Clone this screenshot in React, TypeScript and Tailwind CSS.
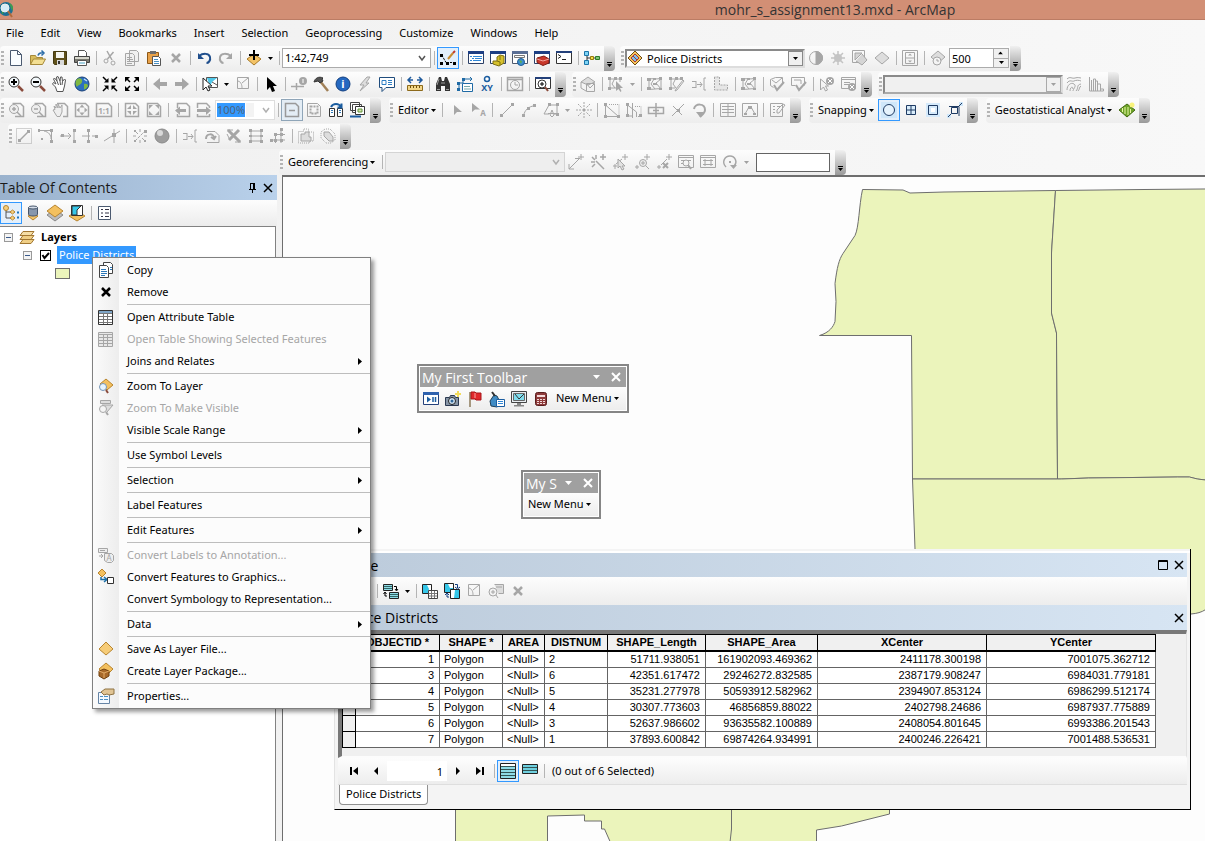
import React from 'react';
import clsx from 'clsx';

/* 16x16 drawings. Shapes without their own colour take the button's text colour. */
const icons: Record<string, React.ReactNode> = {
  arcmap: (
    <>
      <circle cx="6" cy="7" r="7" fill="#1c6f95" stroke="none" />
      <path d="M1 4c3-4 6 0 4 3s-1 5-3 5M9 1c4 1 5 5 3 8" fill="#3f9a52" stroke="none" />
      <circle cx="5" cy="6" r="4" fill="#d5ecf8" stroke="#eee" />
      <path d="M8 9l4 6" stroke="#b06a3a" strokeWidth="2" />
    </>
  ),
  newDoc: (
    <>
      <path d="M2.5.5h7l4 4v11h-11z" fill="#fafdff" stroke="#4b5a70" />
      <path d="M9.5.5v4h4" stroke="#4b5a70" />
    </>
  ),
  open: (
    <>
      <path d="M.5 14.5v-9h5l1 2h6v2" fill="#d9bd5c" stroke="#a5893a" />
      <path d="M.5 14.5l3-5.5h12l-3 5.5z" fill="#f3df93" stroke="#a5893a" />
      <path d="M8 5.5c1-3 3-3 6-2.5M11.5.5L14 3l-2.5 2.5" stroke="#2c6da8" strokeWidth="1.5" />
    </>
  ),
  save: (
    <>
      <path d="M1.5 1.5h13v13h-12l-1-1z" fill="#5f511b" stroke="#463b12" />
      <path d="M4 2h8v6H4z" fill="#f7f7f2" stroke="none" />
      <path d="M5 10h7v5H5z" fill="#d9d9d9" stroke="none" />
      <path d="M6 11h2v3H6z" fill="#333" stroke="none" />
    </>
  ),
  print: (
    <>
      <path d="M4.5 6V.5h6l2 2V6" fill="#fff" stroke="#555" />
      <path d="M.5 6.5h15v6H.5z" fill="#7a7a70" stroke="#444" />
      <path d="M1 7h14v2H1z" fill="#d6d6cc" stroke="none" />
      <path d="M3.5 10.5h9v5h-9z" fill="#fff" stroke="#555" />
      <path d="M5 13h6" stroke="#4aa3c4" />
    </>
  ),
  cut: (
    <>
      <path d="M5 1l5 9M11.5 2l-6 7" strokeWidth="1.5" />
      <circle cx="4" cy="11" r="2" />
      <circle cx="11" cy="13" r="2" />
    </>
  ),
  copy: (
    <>
      <path d="M5.5.5h7l2 2v9h-9zM1.5 3.5h7l2 2v10h-9z" fill="#f1f1f1" />
      <path d="M3 7.5h5M3 9.5h6M3 11.5h6M3 13.5h5" />
    </>
  ),
  copyColor: (
    <>
      <path d="M5.5.5h7l2 2v9h-9z" fill="#fff" stroke="#444" />
      <path d="M1.5 3.5h7l2 2v10h-9z" fill="#fff" stroke="#444" />
      <path d="M3 7.5h5M3 9.5h6M3 11.5h6M3 13.5h4M12 5.5h2M12 7.5h2" stroke="#2d78b8" />
    </>
  ),
  paste: (
    <>
      <path d="M1.5 2.5h11v11h-11z" fill="#e8a24a" stroke="#8c5717" />
      <path d="M4 1h6v3H4z" fill="#6d6d6d" stroke="none" />
      <path d="M6.5 6.5h6l2 2v7h-8z" fill="#fff" stroke="#555" />
      <path d="M8 9.5h4M8 11.5h5M8 13.5h5" stroke="#4a90c4" />
    </>
  ),
  x: <path d="M4 4l8 8M12 4l-8 8" strokeWidth="2.5" />,
  undo: (
    <>
      <path d="M3 6c4-3 10-3 11 1s-2 6-3.5 6" stroke="#1f4e8c" strokeWidth="2" />
      <path d="M2 3v6h6z" fill="#1f4e8c" stroke="none" />
    </>
  ),
  redo: (
    <>
      <path d="M13 6C9 3 3 3 2 7s2 6 3.5 6" strokeWidth="2" />
      <path d="M14 3v6H8z" fill="currentColor" stroke="none" />
    </>
  ),
  addData: (
    <>
      <path d="M1 9l7-5 7 5-7 6z" fill="#f3c367" stroke="#a87a28" />
      <path d="M8 0v10M3 5h10" stroke="#000" strokeWidth="2" />
    </>
  ),
  editSketch: (
    <>
      <path d="M2 5.5l4 7h8" stroke="#000" strokeDasharray="2 1" />
      <path d="M0 4h3v3H0zM0 12h3v3H0zM6 12h3v3H6zM13 12h3v3h-3z" fill="#000" stroke="none" />
      <path d="M8 9l5-6" stroke="#c98d32" strokeWidth="2" />
      <path d="M13 3l2-2" stroke="#c0392b" strokeWidth="2" />
    </>
  ),
  winToc: (
    <>
      <path d="M.5 1.5h15v12H.5z" fill="#fff" stroke="#2b3f66" />
      <path d="M0 1h16v3H0z" fill="#1d3f84" stroke="none" />
      <path d="M2 6.5h2M5 6.5h9M4 8.5h2M7 8.5h7M2 10.5h2M5 10.5h8" stroke="#2f86d6" />
    </>
  ),
  winCatalog: (
    <>
      <path d="M.5 1.5h15v12H.5z" fill="#fff" stroke="#2b3f66" />
      <path d="M0 1h16v3H0z" fill="#1d3f84" stroke="none" />
      <path d="M3 11h4V7l3-2 4 1v7l-5 3-6-2z" fill="#d6c12c" stroke="#7c6e10" />
      <path d="M7 11l3 1v3M10 6v4" stroke="#7c6e10" />
    </>
  ),
  winSearch: (
    <>
      <path d="M.5 1.5h15v12H.5z" fill="#fff" stroke="#4d586c" />
      <path d="M0 1h16v3H0z" fill="#5b6f95" stroke="none" />
      <path d="M2.5 5.5h10v2h-10z" stroke="#777" />
      <circle cx="9" cy="12" r="3.5" fill="#3d8fd0" stroke="#1f5c94" />
      <path d="M7 10l3 1-1 3z" fill="#5fae4c" stroke="none" />
    </>
  ),
  winToolbox: (
    <>
      <path d="M.5 1.5h15v12H.5z" fill="#fff" stroke="#2b3f66" />
      <path d="M0 1h16v3H0z" fill="#1d3f84" stroke="none" />
      <path d="M3 8l7-2 5 3v4l-6 2.5-6-3z" fill="#c8372b" stroke="#7f1d15" />
      <path d="M3 9l6 2 6-2" stroke="#f2a39b" />
    </>
  ),
  winPython: (
    <>
      <path d="M.5 1.5h15v12H.5z" fill="#fff" stroke="#333" />
      <path d="M0 1h16v2H0z" fill="#23407a" stroke="none" />
      <path d="M2 4.5l3 2-3 2M6 9.5h4" stroke="#222" />
    </>
  ),
  model: (
    <>
      <path d="M3 4v8M3 8h9" stroke="#333" />
      <path d="M.5 1.5h4v4h-4zM.5 10.5h4v4h-4z" fill="#7fd4f5" stroke="#1b75a8" />
      <path d="M6.5 6.5h3v3h-3z" fill="#f7dd4c" stroke="#947a0c" />
      <path d="M11.5 6.5h4v3h-4z" fill="#7cc576" stroke="#2d7a2a" />
    </>
  ),
  layerDiamond: (
    <>
      <path d="M1 8l7-7 7 7-7 7z" fill="#f6c65c" stroke="#6d4a13" />
      <path d="M4 8l4-4 4 4-4 4z" fill="#7fc2ea" stroke="#a33" />
      <path d="M6 6l4 4" stroke="#a33" />
    </>
  ),
  contrast: (
    <>
      <circle cx="8" cy="8" r="6.5" />
      <path d="M8 1.5a6.5 6.5 0 0 1 0 13z" fill="currentColor" />
    </>
  ),
  sun: (
    <>
      <path d="M8 1v14M1 8h14M3 3l10 10M13 3L3 13" stroke="#c4c4c4" strokeWidth="1.5" />
      <circle cx="8" cy="8" r="4" fill="#c4c4c4" stroke="none" />
    </>
  ),
  transparency: (
    <>
      <path d="M.5.5h12v12H.5z" />
      <path d="M3 10V3h7zM10 4l5 6-5 5-6-4" fill="#d5d5d5" />
    </>
  ),
  diamond: <path d="M1 8l7-6 7 6-7 6z" fill="#ddd" />,
  swipe: (
    <>
      <path d="M.5.5h15v15H.5zM3.5 2.5h9v11h-9zM3 8h10" />
      <path d="M8 3.5l2 2H6zM8 12.5l2-2H6z" fill="currentColor" stroke="none" />
    </>
  ),
  diamondClock: (
    <>
      <path d="M1 7l7-6 7 6-7 6z" fill="#ddd" />
      <circle cx="7" cy="11" r="4" fill="#f4f4f4" />
      <path d="M7 9v2h2" />
    </>
  ),
  zoomIn: (
    <>
      <path d="M10 10l5 5" stroke="#8a4b3c" strokeWidth="2.5" />
      <circle cx="6" cy="6" r="5" fill="#f4fafd" stroke="#333" />
      <path d="M6 3v6M3 6h6" stroke="#000" strokeWidth="2" />
    </>
  ),
  zoomOut: (
    <>
      <path d="M10 10l5 5" stroke="#8a4b3c" strokeWidth="2.5" />
      <circle cx="6" cy="6" r="5" fill="#f4fafd" stroke="#333" />
      <path d="M3 6h6" stroke="#000" strokeWidth="2" />
    </>
  ),
  hand: (
    <>
      <path
        d="M5 15.5L3.5 11 .5 8l1-1.5L4 8 1.5 3l1-1L5 5 4.5 1 6 .5 8 5l.5-4L10 1l.5 4.5L12.5 3l1 1-1 6-1.5 5.5z"
        fill="#fff"
        stroke="#555"
      />
      <path d="M5 5l1.5 4M8 5l.5 4M10.5 5.5L10 9" stroke="#555" />
    </>
  ),
  globe: (
    <>
      <circle cx="8" cy="8" r="7" fill="#2c6fc0" stroke="#1a3f75" />
      <path d="M3 3c3-2 6 0 5 3s-4 3-5 5C1 9 1 5 3 3zM10 8c3-1 4 1 4 2-1 2-3 4-4 3z" fill="#7fb842" stroke="none" />
      <path d="M10 3l3 2" stroke="#bfe0ff" strokeWidth="1.5" />
    </>
  ),
  fixedIn: (
    <>
      <path d="M1 1l4 4M15 1l-4 4M1 15l4-4M15 15l-4-4" strokeWidth="1.5" />
      <path d="M6.5 2v4.5H2zM9.5 2v4.5H14zM6.5 14V9.5H2zM9.5 14V9.5H14z" fill="currentColor" stroke="none" />
    </>
  ),
  fixedOut: (
    <>
      <path d="M2 2l4 4M14 2l-4 4M2 14l4-4M14 14l-4-4" strokeWidth="1.5" />
      <path d="M1 1h5L1 6zM15 1h-5l5 5zM1 15h5l-5-5zM15 15h-5l5-5z" fill="currentColor" stroke="none" />
    </>
  ),
  left: <path d="M1 8l7-6v4h7v4H8v4z" fill="currentColor" stroke="none" />,
  right: <path d="M15 8L8 2v4H1v4h7v4z" fill="currentColor" stroke="none" />,
  selectFeat: (
    <>
      <path d="M4.5 1.5h11v10h-11z" fill="#fff" stroke="#555" />
      <path d="M5 2h10l-5 4-2 5z" fill="#4fc8ea" stroke="none" />
      <path d="M10 6l5 3" stroke="#555" />
      <path d="M1 2v12l3-3 2 4 2-1-2-4h4z" fill="#fff" stroke="#222" />
    </>
  ),
  clearSel: <path d="M2.5 1.5h11v11h-11zM3 5c4 1 4 6 4 7M7 7l6-5" />,
  pointer: <path d="M4 1v13l3-3 2 5 3-1-2-5h4z" fill="#000" stroke="none" />,
  identifyOff: (
    <>
      <circle cx="12" cy="5" r="4" fill="currentColor" stroke="none" />
      <path d="M12 3v4" stroke="#fff" />
      <path d="M0 10.5h13M5.5 7v7" strokeWidth="1.5" />
    </>
  ),
  hammer: (
    <>
      <path d="M7 5l8 10" stroke="#a08058" strokeWidth="2.5" />
      <path d="M1 6c1-4 5-6 9-4l-1 1 1 2-3 2-2-2z" fill="#555" stroke="#333" />
    </>
  ),
  info: (
    <>
      <circle cx="8" cy="8" r="7" fill="#2468c0" stroke="#123f80" />
      <text x="8" y="12" textAnchor="middle" fontSize="11" fontWeight="bold" fill="#fff" stroke="none">
        i
      </text>
    </>
  ),
  bolt: <path d="M10 1L3 9h4l-4 6 9-8H9l4-6z" fill="#ddd" />,
  popup: (
    <>
      <path d="M.5 1.5h15v10H7l-4 4v-4H.5z" fill="#fff" stroke="#1f4c7d" />
      <path d="M3 4.5h4v4H3zM9 4.5h4M9 6.5h4M9 8.5h4" stroke="#2d7ec4" />
    </>
  ),
  measure: (
    <>
      <path d="M1 4h5M10 4h5M4 1L1 4l3 3M12 1l3 3-3 3" stroke="#1f5a9c" strokeWidth="1.5" />
      <path d="M.5 9.5h15v5H.5z" fill="#f3d789" stroke="#8d6a1c" />
      <path d="M3.5 10v2M6.5 10v2M9.5 10v2M12.5 10v2" stroke="#6b4d0d" />
    </>
  ),
  binoculars: (
    <>
      <path d="M1 15V8l3-7h2l1 4h2l1-4h2l3 7v7h-5v-5H6v5z" fill="#333" stroke="none" />
      <path d="M6 7h4M2 13.5h3M11 13.5h3M4 3l-2 6" stroke="#9a9a9a" />
    </>
  ),
  route: (
    <>
      <path d="M2 13V7h4V3h9M13 1l2 2-2 2" stroke="#1f6aa5" />
      <path d="M0 12h3v3H0zM0 6h3v3H0zM5 2h3v3H5z" fill="#1f6aa5" stroke="none" />
      <path d="M5.5 7.5h10v8h-10z" fill="#fff" stroke="#1f6aa5" />
      <path d="M7 10.5h6M7 13h7" stroke="#7aa" />
    </>
  ),
  xy: (
    <>
      <circle cx="8" cy="3" r="2.5" fill="#fff" stroke="#1b5da0" strokeWidth="1.5" />
      <text x="8" y="15" textAnchor="middle" fontSize="9" fontWeight="bold" fill="#1b5da0" stroke="none">
        XY
      </text>
    </>
  ),
  timeWin: (
    <>
      <path d="M.5 1.5h15v13H.5zM1 3.5h14" strokeWidth="1.5" />
      <circle cx="8" cy="9" r="4.5" />
      <path d="M8 6v3h3" />
    </>
  ),
  viewer: (
    <>
      <path d="M.5 1.5h15v11H.5z" fill="#fff" stroke="#333" />
      <path d="M0 1h16v2H0z" fill="#23407a" stroke="none" />
      <circle cx="7" cy="8" r="4" fill="#fff" stroke="#333" />
      <path d="M7 6v4M5 8h4" stroke="#000" />
      <path d="M10 11l3 4" stroke="#8a4b3c" strokeWidth="2" />
    </>
  ),
  boxes: (
    <>
      <path d="M1 6l7-5 7 5-7 3z" fill="#ddd" />
      <path d="M1 6v6l5 3M6.5 7.5h8v8h-8zM7 8l3 4 4-4" />
    </>
  ),
  mesh: (
    <>
      <path d="M2 3c4-1 8 1 12-1M2 13c4 1 8-1 12 0M2 3v10M14 2v11M7 3L4 8l4 5M14 3l-5 4 5 6" />
      <path d="M0 2h4v3H0zM6 2h3v2H6zM12 1h3v3h-3zM0 11h4v3H0zM12 12h3v2h-3zM6 7h4v2H6z" fill="currentColor" stroke="none" />
    </>
  ),
  meshArrow: (
    <>
      <path d="M1 3h12M1 12h7M2 2v11M12 2v4M7 2L4 8l3 4" />
      <path d="M8 5v10l2.5-2 2 3 1-1-1.5-3h3z" fill="currentColor" stroke="none" />
      <path d="M0 1h3v3H0zM6 1h3v3H6zM11 1h3v3h-3zM0 11h3v3H0z" fill="currentColor" stroke="none" />
    </>
  ),
  meshPencil: (
    <>
      <path d="M1 3h12M2 2v11M2 12h4M7 2L4 8l3 4M15 5l-7 9-2 1 1-2 7-9z" />
      <path d="M0 1h3v3H0zM6 1h3v3H6zM11 1h3v3h-3zM0 11h3v3H0z" fill="currentColor" stroke="none" />
    </>
  ),
  extend: <path d="M1 5.5h4M1 11.5h4M5 5v7M6 8.5h5M9 6l2 2.5L9 11M15 2h-2v12h2" />,
  corner: <path d="M1.5 1v13h13v-5H6.5V1z" strokeDasharray="2 1" fill="#e6e6e6" />,
  validate: (
    <>
      <path d="M1.5 3.5l5-2h7v7M1.5 3.5v6l3 2M3 4l4 3 6-5" />
      <path d="M5 9l3 5 7-8" strokeWidth="2" />
    </>
  ),
  validateExtent: (
    <>
      <path d="M.5 1.5h13v8M.5 1.5v8h4M3 4h7v4" />
      <path d="M5 9l3 5 7-8" strokeWidth="2" />
    </>
  ),
  fixErr: (
    <>
      <path d="M1.5 3v11l3-3 2 4 2-1-2-4h3z" />
      <circle cx="11" cy="5" r="4" fill="currentColor" stroke="none" />
      <path d="M9 3l4 4M13 3L9 7" stroke="#fff" />
    </>
  ),
  errWin: (
    <>
      <path d="M.5 1.5h14v11H.5zM1 3.5h13M3 6.5h6M3 8.5h5" />
      <circle cx="11" cy="11" r="4" fill="currentColor" stroke="none" />
      <path d="M9 9l4 4M13 9l-4 4" stroke="#fff" />
    </>
  ),
  contours: (
    <path d="M1 3c3-3 5 0 8-1s5 0 6 0M1 7c3-4 5-1 7-2s5-1 7 0M1 14c0-5 4-8 7-6s-1 5-1 7M4 15c0-4 3-5 3-2M10 15c3-3 0-6 5-7M12 15c2-2 1-4 3-5" />
  ),
  histogram: <path d="M1.5 1v14h14v-2h-3V8h-3V5h-2V3h-2v12M7.5 5v10M9.5 8v7M12.5 12v3M3.5 4v11" />,
  pageZoomIn: (
    <>
      <path d="M4.5 1.5h8l3 3v10H7" strokeWidth="1.5" />
      <circle cx="6" cy="7" r="4.5" fill="#eee" />
      <path d="M6 5v4M4 7h4M9 10l4 4" strokeWidth="1.5" />
    </>
  ),
  pageZoomOut: (
    <>
      <path d="M4.5 1.5h8l3 3v10H7" strokeWidth="1.5" />
      <circle cx="6" cy="7" r="4.5" fill="#eee" />
      <path d="M4 7h4M9 10l4 4" strokeWidth="1.5" />
    </>
  ),
  pageHand: (
    <>
      <path d="M5 1.5h7.5l3 3v10H11" strokeWidth="1.5" />
      <path d="M5 14.5L1 8l2-.5L2 4l2 2V2l2 4V2l2 4 2-3v7l-2 4.5z" fill="#eee" />
    </>
  ),
  pageFull: (
    <>
      <path d="M1.5 1.5h10l3 3v10h-13z" strokeWidth="1.5" />
      <path d="M8 2.5l2.5 3h-5zM8 13.5l2.5-3h-5zM2.5 8l3-2.5v5zM13.5 8l-3-2.5v5z" fill="currentColor" stroke="none" />
    </>
  ),
  page11: (
    <>
      <path d="M.5 1.5h12l3 3v10H.5z" strokeWidth="1.5" />
      <text x="8" y="12" textAnchor="middle" fontSize="8" fontWeight="bold" fill="currentColor" stroke="none">
        1:1
      </text>
    </>
  ),
  pageIn: (
    <>
      <path d="M1.5 1.5h10l3 3v10h-13z" strokeWidth="1.5" />
      <path d="M7 3v4H3zM9 3v4h4zM7 13V9H3zM9 13V9h4z" fill="currentColor" stroke="none" />
    </>
  ),
  pageOut: (
    <>
      <path d="M1.5 1.5h10l3 3v10h-13z" strokeWidth="1.5" />
      <path d="M3 3h4L3 7zM13 3H9l4 4zM3 13h4L3 9zM13 13H9l4-4z" fill="currentColor" stroke="none" />
    </>
  ),
  pageLeft: (
    <>
      <path d="M3.5 6V1.5h9l3 3v10h-12V12" strokeWidth="1.5" />
      <path d="M1 8.5l5-4V7h6v3H6v3z" fill="currentColor" stroke="none" />
    </>
  ),
  pageRight: (
    <>
      <path d="M1.5 6V1.5h9l3 3V6M1.5 12v2.5h12V12" strokeWidth="1.5" />
      <path d="M15 8.5l-5-4V7H1v3h9v3z" fill="currentColor" stroke="none" />
    </>
  ),
  layoutPage: <path d="M1.5 1.5h10l3 3v10h-13zM5 8.5h6" strokeWidth="1.5" />,
  focusFrame: (
    <>
      <path d="M1.5 1.5h10l3 3v10h-13z" />
      <path d="M4.5 4.5h7v7h-7z" strokeDasharray="2 1" strokeWidth="2" />
    </>
  ),
  changeLayout: (
    <>
      <path d="M1.5 6.5h5v8h-5zM9.5 6.5h5v8h-5z" fill="#fff" stroke="#333" />
      <path d="M3 8.5h2M3 10.5h2M11 8.5h2M11 10.5h2" stroke="#2d78b8" />
      <path d="M3 5c2-4 8-4 10 0M13.5 1.5v4h-4" stroke="#1b5da0" strokeWidth="2" />
    </>
  ),
  dataPages: (
    <>
      <path d="M.5.5h9v8H.5zM2.5 2.5h9v8h-9z" fill="#fff" stroke="#444" />
      <path d="M5.5 4.5h9v8h-9z" fill="#fff" stroke="#333" />
      <path d="M8 7h4v3H8z" fill="#d5e8a8" stroke="#5f8f3f" />
      <path d="M0 14.5h11" stroke="#1b5da0" strokeWidth="2" />
    </>
  ),
  arrowGray: <path d="M5 3v10l3-3h5z" fill="currentColor" stroke="none" />,
  arrowA: (
    <>
      <path d="M1 1v9l3-2.5h5z" fill="currentColor" stroke="none" />
      <text x="12" y="14" textAnchor="middle" fontSize="8" fontWeight="bold" fill="currentColor" stroke="none">
        A
      </text>
    </>
  ),
  line: (
    <>
      <path d="M3 13L13 3" />
      <path d="M1 12h3v3H1zM12 1h3v3h-3z" fill="currentColor" stroke="none" />
    </>
  ),
  arc: (
    <>
      <path d="M3 13c0-4 5-9 10-9" />
      <path d="M1 12h3v3H1zM6 5h3v3H6zM12 2h3v3h-3z" fill="currentColor" stroke="none" />
    </>
  ),
  trace: (
    <>
      <path d="M6 3h8v9h-3M1 12l5-9M1 12h5" />
      <path d="M5 1h3v3H5zM13 1h3v3h-3zM13 11h3v3h-3z" fill="currentColor" stroke="none" />
      <path d="M7 13l2-5 2 5-2 2zM5 11.5h8" />
    </>
  ),
  burst: (
    <>
      <path d="M8 0v5M8 11v5M0 8h5M11 8h5M2 2l4 4M14 2l-4 4M2 14l4-4M14 14l-4-4" strokeDasharray="2 1" />
      <path d="M7 7h2v2H7z" fill="currentColor" />
    </>
  ),
  reshape: (
    <>
      <path d="M1.5 2v12.5h13L1.5 3" />
      <path d="M5 2.5h10V13" strokeDasharray="1 1" />
      <path d="M0 1h3v3H0zM0 13h3v3H0zM13 13h3v3h-3z" fill="currentColor" stroke="none" />
    </>
  ),
  cutPoly: (
    <>
      <path d="M1.5 2v12h5M6.5 1v15M1.5 3l9 7v4" />
      <path d="M9 4.5h6v10H9" strokeDasharray="1 1" />
      <path d="M0 1h3v3H0zM0 12h3v3H0zM13 12h3v3h-3z" fill="currentColor" stroke="none" />
    </>
  ),
  split: <path d="M.5 5.5h15v6H.5zM8 1v14M5 8.5h6" strokeWidth="1.5" />,
  cross: (
    <>
      <path d="M2 14L14 2M3 4l9 9" />
      <path d="M7 7h3v3H7z" fill="currentColor" stroke="none" />
    </>
  ),
  rotate: (
    <>
      <path d="M2 7c1-6 11-6 11 1 0 3-3 5-5 7" strokeWidth="2" />
      <path d="M4 10h8l-4 5z" fill="currentColor" stroke="none" />
    </>
  ),
  tableGray: <path d="M.5 1.5h15v13H.5zM2 4.5h12M2 7.5h12M2 10.5h12M8 2v12" />,
  sketchProps: (
    <>
      <path d="M.5 1.5h15v13H.5zM3 12l4-7h2l4 7" />
      <path d="M6 4h4v3H6zM2 11h3v2H2zM11 11h3v2h-3z" fill="currentColor" stroke="none" />
    </>
  ),
  formPencil: <path d="M.5 1.5h12v13H.5zM3 4.5h2M3 7.5h2M3 10.5h2M7 4.5h4M7 8v3h2l6-8-2-1z" />,
  snapPoint: (
    <>
      <path d="M0 0h16v16H0z" fill="#cfe7fa" stroke="none" />
      <circle cx="8" cy="8" r="5.5" stroke="#1f3b63" fill="#e6f3fd" />
    </>
  ),
  snapGrid: <path d="M3.5 3.5h9v9h-9zM8 3.5v9M3.5 8h9" stroke="#1f3b63" fill="#d9edfb" />,
  snapSquare: (
    <>
      <path d="M1 1h14v14H1z" fill="#d5eafb" stroke="none" />
      <path d="M3.5 3.5h9v9h-9z" stroke="#1f3b63" />
      <path d="M6 6h4v4H6z" fill="#fff" stroke="none" />
    </>
  ),
  snapEdge: (
    <>
      <path d="M0 12h4v4H0zM12 0h4v4h-4z" fill="#cfe7fa" stroke="none" />
      <path d="M4.5 5.5h6v6h-6zM1 15l3.5-3.5M10.5 5.5L15 1M2 4.5h10V14" stroke="#1f3b63" />
    </>
  ),
  geostat: (
    <>
      <path d="M0 8l8-6 8 6-8 7z" fill="#6ea428" stroke="#41690f" />
      <path d="M3.5 6v4M6 5v7M9 5v8M11.5 7v4" stroke="#e9f7a8" />
      <circle cx="13" cy="3" r="2.5" fill="#f9f37c" stroke="none" />
    </>
  ),
  boxLine: (
    <>
      <path d="M.5.5h15v15H.5z" strokeDasharray="1 1" />
      <path d="M4 12l8-8" strokeWidth="1.5" />
      <path d="M2 11h3v3H2zM11 2h3v3h-3z" fill="currentColor" stroke="none" />
    </>
  ),
  fillet: (
    <>
      <path d="M1 2.5h12.5V15M6 3c5 1 7 4 7 8" />
      <path d="M12 1h3v3h-3zM12 12h3v3h-3zM3 10h2v2H3zM0 1h2v3H0z" fill="currentColor" stroke="none" />
    </>
  ),
  extendLine: (
    <>
      <path d="M0 8h10M8 5l3 3-3 3M14 2v12" />
      <path d="M1 6h3v3H1zM13 1h3v3h-3zM13 12h3v3h-3z" fill="currentColor" stroke="none" />
    </>
  ),
  trim: (
    <>
      <path d="M0 8h8M6.5 2v12M10 8h6" />
      <path d="M5 1h3v3H5zM5 12h3v3H5zM13 7h3v3h-3z" fill="currentColor" stroke="none" />
    </>
  ),
  intersect: (
    <>
      <path d="M0 13L16 3M10 1v14" />
      <path d="M8 5h4v4H8z" fill="currentColor" stroke="none" />
    </>
  ),
  explode: (
    <>
      <path d="M3 13l10-10M4 4l2 2M10 10l3 3M8 1v3M8 12v3M1 8h3M12 8h3" strokeDasharray="3 1" />
      <path d="M2 2h2v2H2zM12 2h3v3h-3zM2 12h2v2H2zM12 12h2v2h-2z" fill="currentColor" stroke="none" />
    </>
  ),
  sphere: (
    <>
      <circle cx="8" cy="8" r="7" fill="#9d9d9d" stroke="#8a8a8a" />
      <circle cx="6" cy="5" r="3" fill="#d9d9d9" stroke="none" />
    </>
  ),
  pageRotate: (
    <>
      <path d="M3 3.5h8l4 4v7H3" />
      <path d="M2 11c0-6 8-6 8-1M12 8l-2 3-3-2" strokeWidth="2" />
    </>
  ),
  wand: (
    <>
      <path d="M2 2l12 12M13 2L3 12" strokeWidth="3" />
      <path d="M1 2h6M9 14h6M1 6l3 6" />
    </>
  ),
  rubber: (
    <>
      <path d="M3 2v12M13 2v12M2 3h12M2 8h12M2 13h12" />
      <path d="M1 1h3v3H1zM12 1h3v3h-3zM1 12h3v3H1zM12 12h3v3h-3zM1 7h3v2H1zM12 7h3v2h-3z" fill="currentColor" stroke="none" />
    </>
  ),
  grid: (
    <>
      <path d="M5.5 6v9M11 1v14M5 6.5h10M1 12h14" />
      <path d="M10 0h3v3h-3zM4 5h3v3H4zM10 5h3v3h-3zM10 11h3v3h-3zM0 11h3v3H0zM4 11h3v3H4z" fill="currentColor" stroke="none" />
    </>
  ),
  union: (
    <>
      <path d="M.5 3.5h5V1h5v3h5v9h-4v2h-11z" strokeDasharray="1 1" />
      <path d="M3 6h4V4h4v5h2v4H3z" fill="#ddd" />
    </>
  ),
  buffer: (
    <>
      <path d="M1 4l4-3h5l5 5v6l-4 3H6L1 10z" strokeDasharray="1 1" />
      <path d="M4 4h5l4 5v4H9L4 8z" fill="#ddd" />
    </>
  ),
  linkAdd: <path d="M1 15L11 5M13 0v6M10 3h6M7 4.5h5M1 10v5h5" />,
  linkAuto: <path d="M6 7l8 8M13 0v6M10 3h6M1 8h4M6 1v4M2 3l3 3M2 13l3-3" strokeWidth="1.5" />,
  linkSelect: (
    <>
      <path d="M13 0v6M10 3h6M1 12h4M3 10v5M10 5L4 10" />
      <path d="M6 5v9l2-2 2 4 2-1-2-3h3z" fill="#e2e2e2" />
    </>
  ),
  linkZoom: (
    <>
      <path d="M13 0v6M10 3h6M1 13h4M3 11v4M11 11l4 4" />
      <circle cx="9" cy="9" r="3.5" fill="#eee" />
      <path d="M9 7v4M7 9h4" />
    </>
  ),
  linkDelete: (
    <>
      <path d="M13 0v6M10 3h6M1 13h4M3 11v4M11 5L5 11" />
      <path d="M7 9l5 5M12 9l-5 5" strokeWidth="2" />
    </>
  ),
  viewLink: (
    <>
      <path d="M.5 1.5h15v12H.5zM1 3.5h14M3 6.5h3M10 6.5h3M3 9.5h2" />
      <circle cx="8" cy="9" r="3" />
      <path d="M10 11l3 4" strokeWidth="2" />
    </>
  ),
  linkTable: <path d="M.5 1.5h15v12H.5zM1 3.5h14M3 6.5h10M3 10.5h10M5 5v7M11 5v7" />,
  rotateCw: (
    <>
      <path d="M4 13C-1 8 3 2 8 2s8 6 4 10" strokeWidth="1.5" />
      <path d="M8 11h7l-3.5 4zM7 7h2v2H7z" fill="currentColor" stroke="none" />
    </>
  ),
  tocDrawing: (
    <>
      <path d="M3 4v9h5M3 7h5" stroke="#555" />
      <circle cx="3" cy="3" r="2.5" fill="#f6cf7c" stroke="#b8852f" />
      <path d="M7 7l2.5-2L12 7 9.5 9zM7 13l2.5-2 2.5 2-2.5 2z" fill="#f6cf7c" stroke="#b8852f" />
      <path d="M14 7.5h2M14 12.5h2" stroke="#1b75c0" strokeWidth="2" />
    </>
  ),
  tocSource: (
    <>
      <path d="M3 11l5-3 5 3-5 4z" fill="#f3c367" stroke="#b8852f" />
      <path d="M3.5 2.5v7c1 2 8 2 9 0v-7" fill="#8797ad" stroke="#46556b" />
      <ellipse cx="8" cy="2.5" rx="4.5" ry="1.5" fill="#d5dde8" stroke="#46556b" />
    </>
  ),
  tocVisible: (
    <>
      <path d="M0 10l8-6 8 6-8 6z" fill="#bbb" stroke="#888" />
      <path d="M0 6l8-6 8 6-8 6z" fill="#f3c05f" stroke="#b8852f" />
    </>
  ),
  tocSelection: (
    <>
      <path d="M0 11l8-5 8 5-8 5z" fill="#f3c05f" stroke="#b8852f" />
      <path d="M2.5.5h11v10h-11z" fill="#fff" stroke="#333" />
      <path d="M3 1h9L8 5v5H3z" fill="#35c6e8" stroke="#333" />
    </>
  ),
  options: (
    <>
      <path d="M1.5 1.5h12v13h-12z" fill="#fff" stroke="#4b5a70" />
      <path d="M4 4.5h2M4 8h2M4 11.5h2M8 4.5h4M8 8h4M8 11.5h4" stroke="#334" />
    </>
  ),
  layersStack: (
    <>
      <path d="M1 14.5l3-4h11l-3 4z" fill="#f0cf86" stroke="#a27732" />
      <path d="M1 10.5l3-4h11l-3 4z" fill="#f0cf86" stroke="#a27732" />
      <path d="M1 6.5l3-4h11l-3 4z" fill="#f6dfa7" stroke="#a27732" />
    </>
  ),
  table: (
    <>
      <path d="M.5 1.5h14v14H.5z" fill="#fff" stroke="#333" />
      <path d="M1 2h13v2H1z" fill="#7fa5c6" stroke="none" />
      <path d="M1 4.5h13M1 7.5h13M1 10.5h13M1 13.5h13M5.5 4v11M9.5 4v11" stroke="#777" />
    </>
  ),
  tableOff: <path d="M.5 1.5h14v14H.5zM1 3.5h13M1 6.5h13M1 9.5h13M1 12.5h13M5.5 4v11M9.5 4v11" fill="#e8e8e8" />,
  zoomLayer: (
    <>
      <path d="M2 6l6-5 7 6-6 5z" fill="#f3c05f" stroke="#b8852f" />
      <circle cx="5" cy="9" r="3.5" fill="#e6f4ff" stroke="#7494b5" />
      <path d="M8 12l2 3" stroke="#8a4b3c" strokeWidth="2" />
    </>
  ),
  zoomVisible: (
    <>
      <path d="M2.5.5h10v3h-10zM4 5h11l-6 7" fill="#ddd" />
      <circle cx="5" cy="9" r="3.5" fill="#f4f4f4" />
      <path d="M8 12l2 3" strokeWidth="2" />
    </>
  ),
  labelAnno: (
    <>
      <path d="M.5 1.5h9v4h-9zM6.5 6.5h7l2 2v5l-2 2h-4l-3-2z" fill="#eee" />
      <path d="M2 3.5h5M1 9h4M3 7l2 2-2 2" />
      <text x="11" y="14" textAnchor="middle" fontSize="8" fill="currentColor" stroke="none">
        A
      </text>
    </>
  ),
  featGraphic: (
    <>
      <path d="M0 4l4-4 4 4-4 4z" fill="#f3c05f" stroke="#b8852f" />
      <path d="M3 8v2.5h5M6 8l3 2.5L6 13" stroke="#1b6fa8" strokeWidth="1.5" />
      <path d="M9.5 8.5h6v6h-6z" fill="#fff" stroke="#333" />
    </>
  ),
  layerFile: <path d="M1 8l7-7 7 7-7 6z" fill="#f6cc78" stroke="#b8852f" />,
  layerPkg: (
    <>
      <path d="M1 6l7-6 7 6-7 7z" fill="#f3c05f" stroke="#b8852f" />
      <path d="M1 8l5-2 5 2v5l-5 3-5-3z" fill="#a8692a" stroke="#70400f" />
      <path d="M1 8l5 2 5-2M6 10v5" stroke="#e2ab68" />
    </>
  ),
  properties: (
    <>
      <path d="M.5 4.5h11v11H.5z" fill="#f4f9ff" stroke="#6584a5" />
      <path d="M2 8.5h3M2 11.5h3M6 8.5h4M6 11.5h4" stroke="#4a90c4" />
      <path d="M3 4l4-3h9v5l-5 1-2-1-3 1z" fill="#e0c494" stroke="#8e7242" />
    </>
  ),
  play: (
    <>
      <path d="M.5 2.5h15v11H.5z" fill="#fff" stroke="#23407a" />
      <path d="M0 1h16v3H0z" fill="#2f62ae" stroke="none" />
      <path d="M4 5.5l4 3-4 3z" fill="#1b5da0" stroke="none" />
      <path d="M10 6v5M12.5 6v5" stroke="#1b5da0" strokeWidth="1.5" />
    </>
  ),
  camera: (
    <>
      <path d="M.5 6.5h4l1-2h4l1 2h3v8H.5z" fill="#8795a6" stroke="#2b3950" />
      <circle cx="7" cy="10" r="3.5" fill="#d4e6f5" stroke="#222" />
      <circle cx="7" cy="10" r="1.5" fill="#2f6698" stroke="none" />
      <path d="M13 0v6M10 3h6" stroke="#f3dc5c" strokeWidth="2" />
    </>
  ),
  flag: (
    <>
      <path d="M3 1v15" stroke="#8b7a5a" strokeWidth="1.5" />
      <path d="M4 1h4l1 1h5v7H9L8 8H4z" fill="#e0282c" stroke="#a8171b" />
      <path d="M8 2v5" stroke="#f6a3a0" />
    </>
  ),
  routeTool: (
    <>
      <path d="M1 10l4-6 3 1 4 8-4 3-6-1z" fill="#3f8bc4" stroke="#1e3f58" />
      <path d="M3 1l3 4" stroke="#333" strokeWidth="2" />
      <path d="M7.5 8.5h8v7h-8z" fill="#fff" stroke="#1b5da0" />
      <path d="M9 10.5h5M9 12.5h5" stroke="#2f86d6" />
    </>
  ),
  monitor: (
    <>
      <path d="M.5.5h15v11H.5z" fill="#e9eef2" stroke="#444" />
      <path d="M2.5 2.5h11v7h-11z" fill="#7fdced" stroke="#666" />
      <path d="M4 3l4 5 5-5" stroke="#333" />
      <path d="M6 12h4v2H6zM3 14h10v1.5H3z" fill="#888" stroke="none" />
    </>
  ),
  calculator: (
    <>
      <rect x="2.5" y="1.5" width="11" height="13" rx="2" fill="#8e3b3b" stroke="#5a1e1e" />
      <path d="M4 4h8v2H4z" fill="#f3dada" stroke="none" />
      <path d="M4 8.5h8M4 10.5h8M4 12.5h8" stroke="#f3dada" strokeDasharray="2 1" />
    </>
  ),
  related: (
    <>
      <path d="M.5 1.5h9v6h-9zM6.5 9.5h9v6h-9z" fill="#8edbe6" stroke="#222" />
      <path d="M1 3.5h8M1 5.5h8M7 11.5h8M7 13.5h8" stroke="#366" />
      <path d="M11 3.5h2.5V7M12 6l1.5 2L15 6M4 13H2V9.5M.5 11L2 9l1.5 2" stroke="#000" />
    </>
  ),
  selAttr: (
    <>
      <path d="M.5 1.5h9v9h-9z" fill="#fff" stroke="#222" />
      <path d="M1 2h4l2 4-1 4H1z" fill="#35c6e8" stroke="none" />
      <path d="M6.5 7.5h9v8h-9z" fill="#fff" stroke="#444" />
      <path d="M7 10.5h8M7 13h8M9.5 8v7M12.5 8v7" stroke="#777" />
    </>
  ),
  switchSel: (
    <>
      <path d="M.5.5h9v9h-9z" fill="#35c6e8" stroke="#222" />
      <path d="M6.5 6.5h9v9h-9z" fill="#fff" stroke="#222" />
      <path d="M11 7h4v8h-5z" fill="#35c6e8" stroke="none" />
      <path d="M4 1h5v4H6z" fill="#fff" stroke="none" />
      <path d="M11 1.5h2.5V5M11 4l2.5 2L16 4M5 14H3v-3M1 12l2-2 2 2" stroke="#123f80" />
    </>
  ),
  zoomSel: (
    <>
      <path d="M6.5 1.5h9v9h-5M8 4h6" fill="#ddd" />
      <circle cx="5" cy="9" r="4" fill="#f2f2f2" />
      <path d="M5 7v4M3 9h4M8 12l2 3" />
    </>
  ),
  allRows: (
    <>
      <path d="M.5.5h15v15H.5z" fill="#fff" stroke="#222" />
      <path d="M1 4h14v11H1z" fill="#8edbe6" stroke="none" />
      <path d="M1 3.5h14M1 6.5h14M1 9.5h14M1 12.5h14" stroke="#355" />
    </>
  ),
  selRows: (
    <>
      <path d="M.5 1.5h15v9H.5z" fill="#6fd0df" stroke="#222" />
      <path d="M1 4.5h14M1 7.5h14" stroke="#355" />
    </>
  ),
  pin: <path d="M6.5 3v6M10.5 3v6M9.5 3v6M6 3.5h5M5 9.5h7M8.5 10v3" />,
  close: <path d="M4 4l8 8M12 4l-8 8" strokeWidth="2" />,
  closeThin: <path d="M4 4l8 8M12 4l-8 8" strokeWidth="1.5" />,
  maximize: <path d="M3.5 3.5h9v9h-9zM3 4.5h10" />,
  first: <path d="M4 4h2v8H4zM12 4v8L7 8z" fill="currentColor" stroke="none" />,
  prev: <path d="M10 4v8L6 8z" fill="currentColor" stroke="none" />,
  next: <path d="M6 4v8l4-4z" fill="currentColor" stroke="none" />,
  last: <path d="M10 4h2v8h-2zM4 4v8l5-4z" fill="currentColor" stroke="none" />,
};

function Icon({ name }: { name: string }) {
  return (
    <svg className="h-4 w-4 shrink-0 overflow-visible" viewBox="0 0 16 16" fill="none" stroke="currentColor" aria-hidden="true">
      {icons[name]}
    </svg>
  );
}

interface ToolProps {
  icon: string;
  off?: boolean;
  active?: boolean;
}

function Tool({ icon, off, active }: ToolProps) {
  return (
    <button
      type="button"
      aria-label={icon}
      disabled={off}
      className={clsx(
        'flex h-[22px] w-[22px] shrink-0 items-center justify-center',
        off ? 'text-[#a6a6a6]' : 'text-black',
        active && 'border border-[#3399ff] bg-[#e3effb]'
      )}
    >
      <Icon name={icon} />
    </button>
  );
}

function Tools({ names, off }: { names: string[]; off?: boolean }) {
  return (
    <>
      {names.map((name, i) => (name === '|' ? <Sep key={i} /> : <Tool key={i} icon={name} off={off} />))}
    </>
  );
}

const Sep = () => (
  <span className="flex w-[6px] shrink-0 justify-center">
    <span className="h-[14px] w-px bg-[#b4b4b4]" />
  </span>
);

function Caret({ off }: { off?: boolean }) {
  return (
    <svg
      className={clsx('h-[3px] w-[5px] shrink-0', off ? 'text-[#a0a0a0]' : 'text-black')}
      viewBox="0 0 5 3"
      aria-hidden="true"
    >
      <path d="M0 0h5L2.5 3z" fill="currentColor" />
    </svg>
  );
}

// drop-down arrow that sits beside a tool
const ToolCaret = ({ off }: { off?: boolean }) => (
  <span className="flex w-[11px] shrink-0 justify-center">
    <Caret off={off} />
  </span>
);

function Chevron({ off }: { off?: boolean }) {
  return (
    <svg
      className={clsx('mr-1 h-2 w-2 shrink-0', off ? 'text-[#b0b0b0]' : 'text-[#555]')}
      viewBox="0 0 8 8"
      fill="none"
      stroke="currentColor"
      aria-hidden="true"
    >
      <path d="M1 2l3 4 3-4" strokeWidth="1.5" />
    </svg>
  );
}

function Toolbar({ label, children }: { label: string; children: React.ReactNode }) {
  return (
    <div role="toolbar" aria-label={label} className="flex h-[25px] shrink-0 items-center rounded-sm bg-linear-to-b from-[#fdfdfd] to-[#ededed]">
      <span className="mx-px h-[14px] w-[3px] shrink-0 bg-[repeating-linear-gradient(to_bottom,#b4b4b4_0_2px,transparent_2px_4px)]" />
      {children}
      <button
        type="button"
        aria-label={`${label} options`}
        className="ml-px flex h-full w-[11px] shrink-0 flex-col items-center justify-end gap-px rounded-r-sm bg-linear-to-b from-[#f0f0f0] to-[#9a9a9a] pb-1"
      >
        <span className="h-px w-[5px] bg-black" />
        <Caret />
      </button>
    </div>
  );
}

function MenuButton({ children }: { children: string }) {
  return (
    <button type="button" className="flex h-[22px] shrink-0 items-center gap-[2px] whitespace-nowrap px-1">
      {children}
      <Caret />
    </button>
  );
}

function Toolbars() {
  return (
    <div className="whitespace-nowrap">
      <div className="flex h-[26px] items-center gap-[5px]">
        <Toolbar label="Standard">
          <Tools names={['newDoc', 'open', 'save', 'print', '|']} />
          <Tools names={['cut', 'copy']} off />
          <Tool icon="paste" />
          <Tool icon="x" off />
          <Sep />
          <Tool icon="undo" />
          <Tool icon="redo" off />
          <Sep />
          <Tool icon="addData" />
          <ToolCaret />
          <Sep />
          <span className="flex h-5 w-[149px] items-center border border-[#ababab] bg-white">
            <select aria-label="Map scale" className="h-full min-w-0 flex-1 appearance-none pl-[2px]">
              <option>1:42,749</option>
            </select>
            <Chevron />
          </span>
          <Sep />
          <Tool icon="editSketch" active />
          <Sep />
          <Tools names={['winToc', 'winCatalog', 'winSearch', 'winToolbox', 'winPython', '|', 'model']} />
        </Toolbar>
        <Toolbar label="Effects">
          <span className="flex h-[19px] w-[180px] items-center border-2 border-[#8a8a8a] border-r-[#ddd] border-b-[#ddd] bg-white">
            <Icon name="layerDiamond" />
            <select aria-label="Effects layer" className="h-full min-w-0 flex-1 appearance-none pl-1">
              <option>Police Districts</option>
            </select>
            <span className="flex h-full w-[15px] items-center justify-center border border-[#888] bg-[#f0f0f0]">
              <Caret />
            </span>
          </span>
          <Tools off names={['contrast', 'sun', 'transparency', 'diamond', '|', 'swipe', '|', 'diamondClock']} />
          <span className="flex h-5 w-[60px] items-center border border-[#ababab] bg-white">
            <input aria-label="Flicker rate" defaultValue="500" className="h-full min-w-0 flex-1 pl-[2px]" />
            <span className="flex h-full w-[15px] flex-col border-l border-[#aaa] bg-[#f0f0f0]">
              <button type="button" aria-label="Increase" className="flex flex-1 rotate-180 items-center justify-center">
                <Caret />
              </button>
              <button type="button" aria-label="Decrease" className="flex flex-1 items-center justify-center border-t border-[#aaa]">
                <Caret />
              </button>
            </span>
          </span>
        </Toolbar>
      </div>

      <div className="flex h-[26px] items-center gap-[6px]">
        <Toolbar label="Tools">
          <Tools names={['zoomIn', 'zoomOut', 'hand', 'globe', '|', 'fixedIn', 'fixedOut', '|']} />
          <Tools off names={['left', 'right', '|']} />
          <Tool icon="selectFeat" />
          <ToolCaret />
          <Tools off names={['clearSel', '|']} />
          <Tools names={['pointer', '|']} />
          <Tool icon="identifyOff" off />
          <Tools names={['hammer', 'info']} />
          <Tool icon="bolt" off />
          <Tools names={['popup', '|', 'measure', '|', 'binoculars', 'route', 'xy', '|']} />
          <Tools off names={['timeWin', '|']} />
          <Tool icon="viewer" />
        </Toolbar>
        <Toolbar label="Topology">
          <Tools off names={['boxes', '|', 'meshArrow']} />
          <ToolCaret off />
          <Tools
            off
            names={['|', 'mesh', 'meshPencil', 'extend', 'corner', '|', 'mesh', '|', 'validate', 'validateExtent', '|', 'fixErr', 'errWin']}
          />
        </Toolbar>
        <Toolbar label="Surface">
          <span className="flex h-[19px] w-[180px] items-center justify-end border-2 border-[#8a8a8a] border-r-[#ddd] border-b-[#aaa] bg-[#f0f0f0]">
            <select aria-label="Interpolation layer" disabled className="h-full min-w-0 flex-1 appearance-none" />
            <span className="flex h-full w-[15px] items-center justify-center border border-[#aaa]">
              <Caret off />
            </span>
          </span>
          <Tools off names={['contours', 'histogram']} />
        </Toolbar>
      </div>

      <div className="flex h-[26px] items-center gap-2">
        <Toolbar label="Layout">
          <Tools
            off
            names={['pageZoomIn', 'pageZoomOut', 'pageHand', 'pageFull', 'page11', '|', 'pageIn', 'pageOut', '|', 'pageLeft', 'pageRight']}
          />
          <span className="flex h-5 w-[60px] items-center border border-[#ddd] bg-white">
            <input aria-label="Layout zoom" defaultValue="100%" className="mx-px h-[14px] w-[28px] bg-[#3399ff] text-[#4f6378]" />
            <span className="h-[14px] flex-1 bg-[#f3f3f3]" />
            <span className="w-2" />
            <Chevron off />
          </span>
          <Sep />
          <button
            type="button"
            aria-label="Draft mode"
            className="flex h-[22px] w-[22px] items-center justify-center border border-[#8fa5b8] bg-[#e4edf5] text-[#999]"
          >
            <Icon name="layoutPage" />
          </button>
          <Tool icon="focusFrame" off />
          <Tools names={['changeLayout', 'dataPages']} />
        </Toolbar>
        <Toolbar label="Editor">
          <MenuButton>Editor</MenuButton>
          <Tools off names={['|', 'arrowGray', 'arrowA', '|', 'line', 'arc', 'trace']} />
          <ToolCaret off />
          <Tools
            off
            names={['burst', '|', 'reshape', 'cutPoly', 'split', 'cross', 'rotate', '|', 'tableGray', 'sketchProps', '|', 'formPencil']}
          />
        </Toolbar>
        <Toolbar label="Snapping">
          <MenuButton>Snapping</MenuButton>
          <Tool icon="snapPoint" active />
          <Tools names={['snapGrid', 'snapSquare', 'snapEdge']} />
        </Toolbar>
        <Toolbar label="Geostatistical Analyst">
          <MenuButton>Geostatistical Analyst</MenuButton>
          <Tool icon="geostat" />
        </Toolbar>
      </div>

      <div className="flex h-[26px] items-center pl-2">
        <Toolbar label="Advanced Editing">
          <Tools
            off
            names={['boxLine', 'fillet', 'extendLine', 'trim', 'intersect', '|', 'explode', 'sphere', '|', 'extend', 'pageRotate', 'wand', 'rubber', 'grid', '|', 'union', 'buffer']}
          />
        </Toolbar>
      </div>

      <div className="flex h-[26px] items-center pl-[279px]">
        <Toolbar label="Georeferencing">
          <MenuButton>Georeferencing</MenuButton>
          <Sep />
          <span className="flex h-5 w-[180px] items-center justify-end border border-[#d4d4d4] bg-[#eeeeee]">
            <select aria-label="Georeferencing layer" disabled className="h-full min-w-0 flex-1 appearance-none" />
            <Chevron off />
          </span>
          <Tools
            off
            names={['linkAdd', 'linkAuto', 'linkSelect', 'linkZoom', 'linkDelete', 'viewLink', 'linkTable', 'rotateCw']}
          />
          <ToolCaret off />
          <input aria-label="Rotation" className="mx-1 h-[19px] w-[74px] border border-[#646464] bg-white" />
        </Toolbar>
      </div>
    </div>
  );
}

function TreeToggle() {
  return (
    <button type="button" aria-label="Collapse" className="flex h-[9px] w-[9px] shrink-0 items-center justify-center border border-[#999] bg-[#f4f4f4]">
      <span className="h-px w-[5px] bg-[#3a5a8c]" />
    </button>
  );
}

function TitleButton({ icon, label }: { icon: string; label: string }) {
  return (
    <button type="button" aria-label={label} className="flex w-4 justify-center">
      <Icon name={icon} />
    </button>
  );
}

function TableOfContents() {
  return (
    <aside className="flex w-[277px] shrink-0 flex-col">
      <div className="flex h-[25px] items-center bg-linear-to-r from-[#9ab2cd] to-[#b9d1eb] pr-px">
        <h2 className="flex-1 font-['Open_Sans',sans-serif] text-[14px] text-[#1a1a1a]">Table Of Contents</h2>
        <TitleButton icon="pin" label="Auto hide" />
        <TitleButton icon="closeThin" label="Close" />
      </div>
      <div className="flex h-[26px] items-center bg-linear-to-b from-[#fdfdfd] to-[#ececec]">
        <Tool icon="tocDrawing" active />
        <Tools names={['tocSource', 'tocVisible', 'tocSelection', '|', 'options']} />
      </div>
      <div className="mr-px flex-1 border-t border-r border-[#828282] bg-white pt-px">
        <div className="flex h-[18px] items-center gap-[6px] pl-1">
          <TreeToggle />
          <Icon name="layersStack" />
          <span className="font-['Open_Sans',sans-serif] font-bold">Layers</span>
        </div>
        <div className="flex h-[18px] items-center pl-[23px]">
          <TreeToggle />
          <label className="flex items-center gap-[6px] pl-2">
            <span className="relative flex h-[11px] w-[11px]">
              <input type="checkbox" defaultChecked className="peer h-[11px] w-[11px] appearance-none border border-black bg-white" />
              <svg className="pointer-events-none absolute inset-0 hidden h-[11px] w-[11px] peer-checked:block" viewBox="0 0 11 11" fill="none" stroke="#000">
                <path d="M2.5 5l2 3 4.5-5" strokeWidth="2" />
              </svg>
            </span>
            <span className="flex h-[18px] items-center bg-[#3399ff] px-[2px] text-white">Police Districts</span>
          </label>
        </div>
        <div className="flex h-[18px] items-center pl-[55px]">
          <span className="h-[11px] w-[15px] border border-[#6e6e6e] bg-[#ebf4bb]" />
        </div>
      </div>
    </aside>
  );
}

interface MenuEntry {
  label?: string;
  icon?: string;
  off?: boolean;
  sub?: boolean;
}

// an entry without a label is a divider
const layerMenu: MenuEntry[] = [
  { label: 'Copy', icon: 'copyColor' },
  { label: 'Remove', icon: 'x' },
  {},
  { label: 'Open Attribute Table', icon: 'table' },
  { label: 'Open Table Showing Selected Features', icon: 'tableOff', off: true },
  { label: 'Joins and Relates', sub: true },
  {},
  { label: 'Zoom To Layer', icon: 'zoomLayer' },
  { label: 'Zoom To Make Visible', icon: 'zoomVisible', off: true },
  { label: 'Visible Scale Range', sub: true },
  {},
  { label: 'Use Symbol Levels' },
  {},
  { label: 'Selection', sub: true },
  {},
  { label: 'Label Features' },
  {},
  { label: 'Edit Features', sub: true },
  {},
  { label: 'Convert Labels to Annotation...', icon: 'labelAnno', off: true },
  { label: 'Convert Features to Graphics...', icon: 'featGraphic' },
  { label: 'Convert Symbology to Representation...' },
  {},
  { label: 'Data', sub: true },
  {},
  { label: 'Save As Layer File...', icon: 'layerFile' },
  { label: 'Create Layer Package...', icon: 'layerPkg' },
  {},
  { label: 'Properties...', icon: 'properties' },
];

function LayerMenu() {
  return (
    <div
      role="menu"
      className="absolute top-[82px] left-[92px] z-20 w-[279px] border border-[#808080] bg-[#fcfcfc] bg-[linear-gradient(to_right,#fbfbfb,#ededed)] bg-[length:26px_100%] bg-no-repeat py-px shadow-[3px_3px_4px_rgba(0,0,0,0.4)]"
    >
      {layerMenu.map((entry, i) =>
        entry.label ? (
          <button
            key={i}
            type="button"
            role="menuitem"
            disabled={entry.off}
            className={clsx('flex h-[22px] w-full items-center pr-2 pl-[5px] text-left', entry.off ? 'text-[#a6a6a6]' : 'text-black')}
          >
            <span className="flex w-[29px] shrink-0">{entry.icon && <Icon name={entry.icon} />}</span>
            <span className="flex-1 whitespace-nowrap">{entry.label}</span>
            {entry.sub && (
              <svg className="h-[7px] w-1" viewBox="0 0 4 7" aria-hidden="true">
                <path d="M0 0v7l4-3.5z" />
              </svg>
            )}
          </button>
        ) : (
          <div key={i} role="separator" className="flex h-[3px] items-center pl-[34px]">
            <span className="h-px flex-1 bg-[#bdbdbd]" />
          </div>
        )
      )}
    </div>
  );
}

function FloatingBar({ title, className, children }: { title: string; className: string; children: React.ReactNode }) {
  return (
    <section className={clsx('absolute border-2 border-[#868686] bg-white p-px', className)}>
      <div className="flex h-[20px] items-center bg-[#a0a0a0] pl-[2px] text-white">
        <h2 className="flex-1 font-['Open_Sans',sans-serif] text-[14px] whitespace-nowrap">{title}</h2>
        <button type="button" aria-label="Options" className="flex w-5 justify-center">
          <svg className="h-1 w-[7px]" viewBox="0 0 7 4" fill="currentColor" aria-hidden="true">
            <path d="M0 0h7L3.5 4z" />
          </svg>
        </button>
        <button type="button" aria-label="Close" className="flex w-5 justify-center">
          <Icon name="close" />
        </button>
      </div>
      <div className="flex h-[23px] items-center bg-linear-to-b from-[#fdfdfd] to-[#ededed]">{children}</div>
    </section>
  );
}

const columns = [
  { label: 'OBJECTID *', width: 84, align: 'text-right pr-[5px]' },
  { label: 'SHAPE *', width: 63, align: 'text-left pl-1' },
  { label: 'AREA', width: 42, align: 'text-left pl-1' },
  { label: 'DISTNUM', width: 63, align: 'text-left pl-1' },
  { label: 'SHAPE_Length', width: 98, align: 'text-right pr-[5px]' },
  { label: 'SHAPE_Area', width: 112, align: 'text-right pr-[5px]' },
  { label: 'XCenter', width: 169, align: 'text-right pr-[5px]' },
  { label: 'YCenter', width: 169, align: 'text-right pr-[5px]' },
];

const rows = [
  ['1', 'Polygon', '<Null>', '2', '51711.938051', '161902093.469362', '2411178.300198', '7001075.362712'],
  ['3', 'Polygon', '<Null>', '6', '42351.617472', '29246272.832585', '2387179.908247', '6984031.779181'],
  ['4', 'Polygon', '<Null>', '5', '35231.277978', '50593912.582962', '2394907.853124', '6986299.512174'],
  ['5', 'Polygon', '<Null>', '4', '30307.773603', '46856859.88022', '2402798.24686', '6987937.775889'],
  ['6', 'Polygon', '<Null>', '3', '52637.986602', '93635582.100889', '2408054.801645', '6993386.201543'],
  ['7', 'Polygon', '<Null>', '1', '37893.600842', '69874264.934991', '2400246.226421', '7001488.536531'],
];

function AttributeTable() {
  return (
    <section className="absolute top-[374px] left-[52px] w-[857px] border-r border-b border-l border-black border-l-[#e3e3e3] bg-[#f4f4f4] pt-[2px] pb-px">
      <div className="border-t-2 border-white px-[3px]">
        <div className="flex h-6 items-center bg-linear-to-r from-[#bccbdb] to-[#d7e5f3] pl-[5px]">
          <h2 className="flex-1 font-['Open_Sans',sans-serif] text-[14px]">Table</h2>
          <TitleButton icon="maximize" label="Maximize" />
          <TitleButton icon="closeThin" label="Close table" />
        </div>
        <div className="flex h-7 items-center bg-linear-to-b from-[#fdfdfd] to-[#ededed]">
          <Tool icon="table" />
          <ToolCaret />
          <span className="w-[3px]" />
          <Sep />
          <Tool icon="related" />
          <ToolCaret />
          <Sep />
          <Tools names={['selAttr', 'switchSel']} />
          <Tools off names={['clearSel', 'zoomSel', 'x']} />
        </div>
        <div className="flex h-[25px] items-center bg-linear-to-r from-[#bccbdb] to-[#d7e5f3] pl-[5px]">
          <h3 className="flex-1 font-['Open_Sans',sans-serif] text-[14px]">Police Districts</h3>
          <TitleButton icon="closeThin" label="Close Police Districts" />
        </div>
      </div>

      <div className="mx-[3px] border-t-4 border-r border-b-2 border-l-4 border-[#787878] border-r-[#e3e3e3] border-b-[#fcfcfc] bg-[#f0f0f0] pb-2">
        <table className="table-fixed border-collapse font-['Liberation_Sans',Arial,sans-serif] text-[11px] leading-[15px]">
          <colgroup>
            <col className="w-[13px]" />
            {columns.map((column) => (
              <col key={column.label} style={{ width: column.width }} />
            ))}
          </colgroup>
          <thead>
            <tr className="h-4">
              <th className="border border-[#646464] border-b-black bg-[#f0f0f0] p-0" aria-label="Row" />
              {columns.map((column) => (
                <th key={column.label} scope="col" className="border border-black border-b-2 bg-[#f0f0f0] p-0 whitespace-nowrap">
                  {column.label}
                </th>
              ))}
            </tr>
          </thead>
          <tbody>
            {rows.map((row) => (
              <tr key={row[0]} className="h-4">
                <td className="border border-black bg-[#f0f0f0] p-0" />
                {row.map((value, i) => (
                  <td key={i} className={clsx('border border-[#646464] bg-white p-0 whitespace-nowrap', columns[i].align)}>
                    {value}
                  </td>
                ))}
              </tr>
            ))}
          </tbody>
        </table>
      </div>

      <div className="mx-[3px] flex h-[27px] items-center border-b border-[#dedede] bg-linear-to-b from-[#fdfdfd] to-[#ededed] pl-[5px]">
        <Tools names={['first', 'prev']} />
        <input aria-label="Record" defaultValue="1" className="h-5 w-[60px] bg-white pr-1 text-right" />
        <Tools names={['next', 'last', '|']} />
        <Tool icon="allRows" active />
        <Tools names={['selRows', '|']} />
        <span className="pl-[5px]">(0 out of 6 Selected)</span>
      </div>
      <div className="flex h-[23px] items-start pl-1">
        <button type="button" className="h-5 rounded-b border border-t-0 border-[#919191] bg-white px-[6px]">
          Police Districts
        </button>
      </div>
    </section>
  );
}

function MapView() {
  return (
    <div className="relative min-h-[560px] flex-1">
      <div className="absolute inset-0 overflow-hidden border-t-2 border-l border-[#6e6e6e] bg-[#fdfdfd]">
        {/* district polygons, drawn in map view pixels */}
        <svg className="h-full w-full" fill="#ebf4bb" stroke="#6e6e6e" aria-label="Map of police districts">
          <path d="M579.5 12.5L620 13l7 3 34-1 111.5-1.5L768.5 76v60l5 20 1 146H629.5L628.5 158.5H536.5c10-3 14-9 15.5-14l1-20-1-18c2-16 4-24 8-30l12-18c4-8 4-30 7.500-46z" />
          <path d="M772.5 13.5L861 12.5 1400 8v300L922 303l-8-1-8-2h-12l-89 1-27 1h-3.5L773.5 156l-5-20V76z" />
          <path d="M629.5 302h145l4 0 27-1 89-1h12l8 2 8 1 478 5v94L934 420c-8 12-14 16-26 17H634l-2-65z" />
          <path d="M172.5 670v-70h434v37l-48 12-25 4v20z" />
          <path d="M264.5 670v-31l37-1v6h17v8h3l8 18z" fill="#fdfdfd" />
          <path d="M448.5 600v52l-2 18" />
        </svg>
      </div>
      <FloatingBar title="My First Toolbar" className="top-[189px] left-[135px] w-[212px]">
        <Tools names={['play', 'camera', 'flag', 'routeTool', 'monitor', 'calculator']} />
        <MenuButton>New Menu</MenuButton>
      </FloatingBar>
      <FloatingBar title="My S" className="top-[295px] left-[239px] w-[80px]">
        <MenuButton>New Menu</MenuButton>
      </FloatingBar>
      <AttributeTable />
    </div>
  );
}

export default function App() {
  return (
    <div className="flex min-h-screen flex-col overflow-hidden bg-linear-to-r from-[#f0f0f0] to-[#f8f8f8] font-['Noto_Sans','Open_Sans',sans-serif] text-[11px] text-black">
      <header>
        <div className="flex h-5 items-center border-b border-[#bb7c64] bg-[#d28f75]">
          <Icon name="arcmap" />
          <h1 className="flex-1 pl-[449px] text-center font-['Open_Sans',sans-serif] text-[14px] leading-none whitespace-nowrap text-[#333]">
            mohr_s_assignment13.mxd - ArcMap
          </h1>
        </div>
        <nav className="flex h-[25px] items-center gap-[17px] pt-px pl-[6px]">
          {['File', 'Edit', 'View', 'Bookmarks', 'Insert', 'Selection', 'Geoprocessing', 'Customize', 'Windows', 'Help'].map((item) => (
            <button key={item} type="button">
              {item}
            </button>
          ))}
        </nav>
        <Toolbars />
      </header>
      <main className="relative flex flex-1 gap-[5px]">
        <TableOfContents />
        <MapView />
        <LayerMenu />
      </main>
    </div>
  );
}
